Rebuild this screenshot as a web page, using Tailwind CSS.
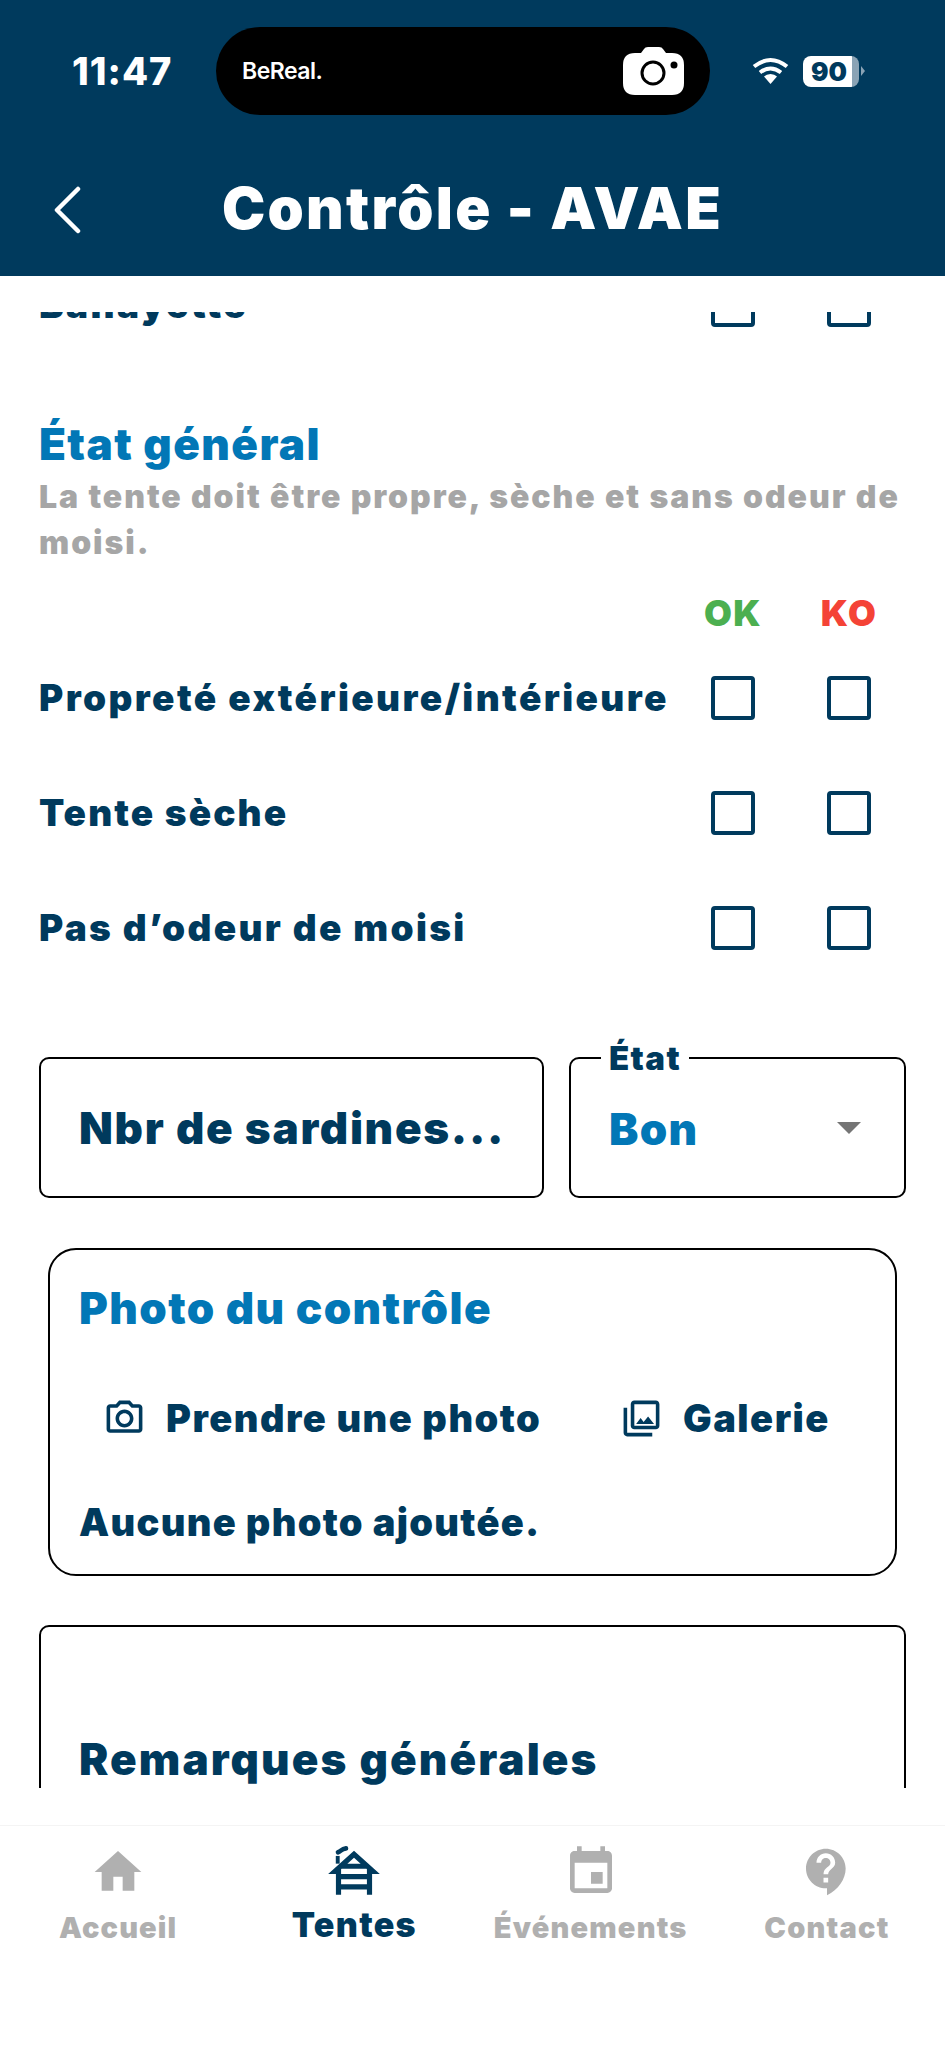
<!DOCTYPE html>
<html lang="fr">
<head>
  <meta charset="UTF-8" />
  <meta name="viewport" content="width=device-width, initial-scale=1" />
  <title>Contrôle - AVAE</title>
  <script src="https://cdn.jsdelivr.net/npm/@tailwindcss/browser@4"></script>
</head>
<body class="bg-white font-['Inter','Liberation_Sans',sans-serif] text-[#003a5d]">
  <div class="w-[945px] h-[2048px] flex flex-col overflow-hidden">
    <!-- Header + status bar -->
    <header class="h-[276px] shrink-0 bg-[#003a5d] text-white">
      <div class="h-[142px] flex items-center pl-[72px]">
        <span class="w-[144px] text-[38px] font-extrabold leading-none tracking-[1px]">11:47</span>
        <div class="w-[494px] h-[88px] bg-black rounded-full flex items-center justify-between pl-[26px] pr-[26px]">
          <span class="text-[23px] font-semibold tracking-[-0.5px]">BeReal.</span>
          <svg class="w-[61px] h-[48px]" viewBox="0 0 61 48"><path fill="#fff" d="M12 6h6l3-4q1-2 4-2h11q3 0 4 2l3 4h6q12 0 12 12v18q0 12-12 12H12Q0 48 0 36V18Q0 6 12 6z"/><circle cx="30" cy="26" r="11" fill="none" stroke="#000" stroke-width="3"/><circle cx="51" cy="18" r="3.500" fill="#000"/></svg>
        </div>
        <svg class="ml-[42px] w-[37px] h-[28px]" viewBox="0 0 37 28"><path fill="none" stroke="#fff" stroke-width="4" d="M2 9.500q16.500-13 33 0M8 15.500q10.500-8 21 0"/><path fill="#fff" d="M18.500 17q4 0 6.500 2.500L18.500 27 12 19.500Q14.500 17 18.500 17z"/></svg>
        <div class="ml-[14px] w-[56px] h-[31px] rounded-[8px] bg-[linear-gradient(90deg,#fff_88%,#8aa3b5_88%)] text-[#003a5d] text-[26px] font-black leading-[31px] pl-[8px]">90</div>
        <div class="ml-[2px] w-0 h-0 border-y-[5px] border-y-transparent border-l-[4px] border-l-[#8aa3b5]"></div>
      </div>
      <div class="h-[134px] relative flex items-center justify-center">
        <svg class="absolute left-[52px] top-[44px] w-[30px] h-[48px]" viewBox="0 0 30 48"><path fill="none" stroke="#fff" stroke-width="4.500" stroke-linecap="round" stroke-linejoin="round" d="M26 3 5 24l21 21"/></svg>
        <h1 class="text-[58px] font-black leading-none tracking-[2.300px] pb-[2px]">Contrôle - AVAE</h1>
      </div>
    </header>

    <!-- Scrolling content -->
    <main class="h-[1476px] mt-[36px] shrink-0 overflow-hidden">
      <div class="flex items-center h-[60px] mt-[-37px] pl-[39px] pr-[74px]">
        <span class="flex-1 text-[37px] font-black tracking-[2.400px]">Banayette</span>
        <span class="w-[44px] h-[44px] rounded-[4px] border-[4px] border-[#003a5d] mr-[72px]"></span>
        <span class="w-[44px] h-[44px] rounded-[4px] border-[4px] border-[#003a5d]"></span>
      </div>

      <div class="px-[39px]">
        <h2 class="mt-[85px] text-[44px] leading-[48px] font-black text-[#0277b6] tracking-[1.400px]">État général</h2>
        <p class="mt-[6px] text-[32px] leading-[46px] font-black text-[#a6a6a6] tracking-[1.950px]">La tente doit être propre, sèche et sans odeur de moisi.</p>
      </div>

      <div class="mt-[27px] h-[40px] flex items-center justify-end pr-[74px] text-[36px] font-black leading-none tracking-[1.500px]">
        <span class="w-[44px] flex justify-center text-[#4caf50] mr-[72px]">OK</span>
        <span class="w-[44px] flex justify-center text-[#f44336]">KO</span>
      </div>

      <div class="mt-[7px]">
        <div class="flex items-center h-[115px] pl-[39px] pr-[74px]">
          <span class="flex-1 text-[37px] font-black tracking-[2.400px] whitespace-nowrap">Propreté extérieure/intérieure</span>
          <span class="w-[44px] h-[44px] rounded-[4px] border-[4px] border-[#003a5d] mr-[72px]"></span>
          <span class="w-[44px] h-[44px] rounded-[4px] border-[4px] border-[#003a5d]"></span>
        </div>
        <div class="flex items-center h-[115px] pl-[39px] pr-[74px]">
          <span class="flex-1 text-[37px] font-black tracking-[2.100px]">Tente sèche</span>
          <span class="w-[44px] h-[44px] rounded-[4px] border-[4px] border-[#003a5d] mr-[72px]"></span>
          <span class="w-[44px] h-[44px] rounded-[4px] border-[4px] border-[#003a5d]"></span>
        </div>
        <div class="flex items-center h-[115px] pl-[39px] pr-[74px]">
          <span class="flex-1 text-[37px] font-black tracking-[2.300px]">Pas d’odeur de moisi</span>
          <span class="w-[44px] h-[44px] rounded-[4px] border-[4px] border-[#003a5d] mr-[72px]"></span>
          <span class="w-[44px] h-[44px] rounded-[4px] border-[4px] border-[#003a5d]"></span>
        </div>
      </div>

      <!-- Sardines + state -->
      <div class="mt-[72px] mx-[39px] flex gap-[25px]">
        <div class="w-[505px] h-[141px] border-2 border-black rounded-[10px] flex items-center pl-[38px] text-[44px] font-black tracking-[1.700px]">Nbr de sardines...</div>
        <div class="relative w-[337px] h-[141px] border-2 border-black rounded-[10px] flex items-center justify-between pl-[38px] pr-[43px]">
          <span class="absolute left-[30px] top-[-19px] bg-white px-[8px] text-[33px] leading-[36px] font-black tracking-[1.400px]">État</span>
          <span class="text-[44px] font-black text-[#0277b6] mt-[3px] tracking-[1.300px]">Bon</span>
          <span class="w-0 h-0 border-x-[12px] border-x-transparent border-t-[12px] border-t-[#757575]"></span>
        </div>
      </div>

      <!-- Photo card -->
      <section class="mt-[50px] mx-[48px] border-2 border-black rounded-[28px] h-[328px] pt-[34px] pl-[29px]">
        <h2 class="text-[44px] leading-[48px] font-black text-[#0277b6] tracking-[1.400px]">Photo du contrôle</h2>
        <div class="mt-[62px] h-[48px] flex items-center pl-[24px] text-[38px] font-black tracking-[1.500px]">
          <svg class="w-[43px] h-[43px] fill-[#003a5d]" viewBox="0 0 24 24"><path d="M14.12 4l1.83 2H20v12H4V6h4.05l1.83-2h4.24M15 2H9L7.17 4H4c-1.1 0-2 .9-2 2v12c0 1.1.9 2 2 2h16c1.1 0 2-.9 2-2V6c0-1.1-.9-2-2-2h-3.17L15 2zm-3 7c1.65 0 3 1.35 3 3s-1.35 3-3 3-3-1.35-3-3 1.35-3 3-3m0-2c-2.76 0-5 2.24-5 5s2.24 5 5 5 5-2.24 5-5-2.24-5-5-5z"/></svg>
          <span class="ml-[20px] w-[373px] whitespace-nowrap">Prendre une photo</span>
          <svg class="ml-[81px] w-[43px] h-[43px] fill-[#003a5d]" viewBox="0 0 24 24"><path d="M20 4v12H8V4h12m0-2H8c-1.1 0-2 .9-2 2v12c0 1.1.9 2 2 2h12c1.1 0 2-.9 2-2V4c0-1.1-.9-2-2-2zm-8.500 9.670l1.690 2.260 2.480-3.100L19 15H9zM2 6v14c0 1.1.9 2 2 2h14v-2H4V6H2z"/></svg>
          <span class="ml-[20px]">Galerie</span>
        </div>
        <p class="mt-[58px] text-[38px] leading-[44px] font-black tracking-[1.300px]">Aucune photo ajoutée.</p>
      </section>

      <!-- Remarks -->
      <div class="mt-[49px] mx-[39px] h-[300px] border-2 border-black rounded-[10px] pl-[38px] pt-[106px] text-[44px] leading-[52px] font-black tracking-[2.100px]">Remarques générales</div>
    </main>

    <!-- Tab bar -->
    <nav class="mt-[37px] flex-1 border-t border-[#f4f4f4] grid grid-cols-4 content-start text-[#b0b0b0]">
      <a class="flex flex-col items-center pt-[18px]">
        <svg class="w-[56px] h-[56px] fill-[#b0b0b0]" viewBox="0 0 24 24"><path d="M10 20v-6h4v6h5v-8h3L12 3 2 12h3v8z"/></svg>
        <span class="mt-[10px] text-[29px] leading-[36px] font-black tracking-[1.100px]">Accueil</span>
      </a>
      <a class="flex flex-col items-center pt-[17px] text-[#003a5d]">
        <svg class="w-[62px] h-[62px] fill-[#003a5d]" viewBox="0 0 24 24"><path d="M19 12h3L12 3 2 12h3v8h2v-2h10v2h2v-8zM7.210 10h9.580L17 10.180V12H7v-1.820l.21-.18zm7.360-2H9.430L12 5.690 14.570 8zM7 16v-2h10v2H7z"/><path fill="none" stroke="#003a5d" stroke-width="1.500" d="M5.700 8V5"/><path fill="none" stroke="#003a5d" stroke-width="1.800" stroke-linecap="round" d="M5.800 3.600c1.100-.4 1.300-1.300 3.100-1.500"/></svg>
        <span class="mt-[1px] text-[34px] leading-[38px] font-black tracking-[1.300px]">Tentes</span>
      </a>
      <a class="flex flex-col items-center pt-[18px]">
        <svg class="w-[56px] h-[56px] fill-[#b0b0b0]" viewBox="0 0 24 24"><path d="M17 12h-5v5h5v-5zM16 1v2H8V1H6v2H5c-1.110 0-1.990.9-1.990 2L3 19c0 1.100.89 2 2 2h14c1.100 0 2-.9 2-2V5c0-1.100-.9-2-2-2h-1V1h-2zm3 18H5V8h14v11z"/></svg>
        <span class="mt-[10px] text-[29px] leading-[36px] font-black tracking-[1.200px]">Événements</span>
      </a>
      <a class="flex flex-col items-center pt-[18px]">
        <svg class="w-[56px] h-[56px] fill-[#b0b0b0]" viewBox="0 0 24 24"><path d="M11.500 2C6.810 2 3 5.810 3 10.500S6.810 19 11.500 19h.5v3c4.860-2.340 8-7 8-11.500C20 5.810 16.190 2 11.500 2zm1 14.500h-2v-2h2v2zm0-3.500h-2c0-3.250 3-3 3-5 0-1.100-.9-2-2-2s-2 .9-2 2h-2c0-2.210 1.790-4 4-4s4 1.790 4 4c0 2.500-3 2.750-3 5z"/></svg>
        <span class="mt-[10px] text-[29px] leading-[36px] font-black tracking-[1.200px]">Contact</span>
      </a>
    </nav>
  </div>
</body>
</html>
